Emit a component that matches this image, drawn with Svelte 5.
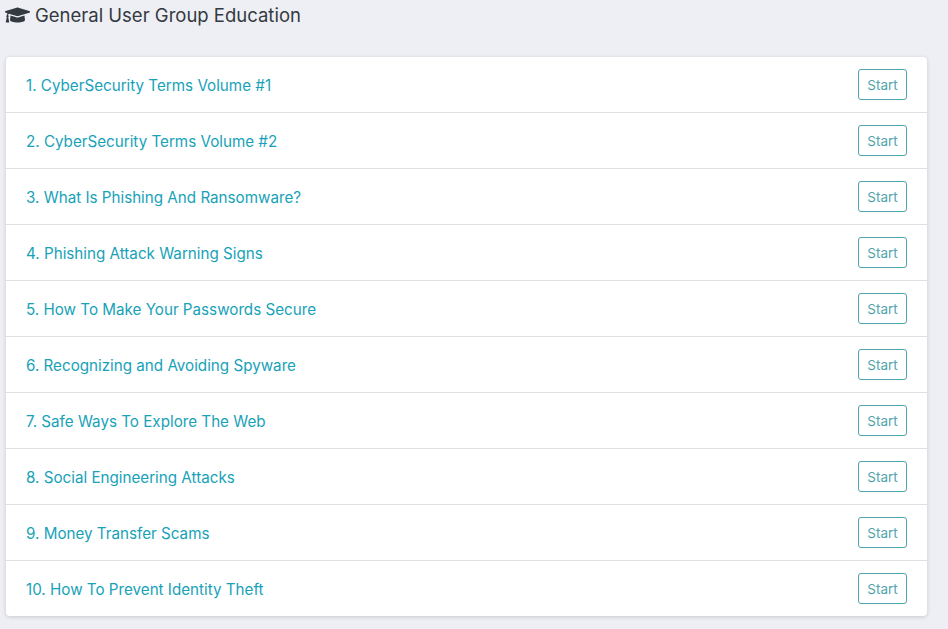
<script>
  const courses = [
    "1. CyberSecurity Terms Volume #1",
    "2. CyberSecurity Terms Volume #2",
    "3. What Is Phishing And Ransomware?",
    "4. Phishing Attack Warning Signs",
    "5. How To Make Your Passwords Secure",
    "6. Recognizing and Avoiding Spyware",
    "7. Safe Ways To Explore The Web",
    "8. Social Engineering Attacks",
    "9. Money Transfer Scams",
    "10. How To Prevent Identity Theft"
  ];
</script>

<div class="page">
  <h1 class="title">
    <svg class="cap" viewBox="0 0 640 512" aria-hidden="true">
      <path d="M622.34 153.2L343.4 67.5c-15.2-4.67-31.6-4.67-46.79 0L17.66 153.2c-23.54 7.23-23.54 38.36 0 45.59l48.63 14.94c-10.67 13.19-17.23 29.28-17.88 46.9C38.78 266.15 32 276.11 32 288c0 10.78 5.68 19.85 13.86 25.65L20.33 428.53C18.11 438.52 25.71 448 35.94 448h56.11c10.24 0 17.84-9.48 15.62-19.47L82.14 313.65C90.32 307.85 96 298.78 96 288c0-11.57-6.47-21.25-15.66-26.87.76-15.02 8.44-28.3 20.69-36.72L296.6 284.5c9.06 2.78 26.44 6.25 46.79 0l278.95-85.7c23.55-7.24 23.55-38.36 0-45.6zM352.79 315.09c-28.53 8.76-52.84 3.92-65.59 0l-145.02-44.55L128 384c0 35.35 85.96 64 192 64s192-28.65 192-64l-14.18-113.47-145.03 44.56z"/>
    </svg>
    General User Group Education
  </h1>

  <div class="card">
    {#each courses as course}
      <div class="row">
        <a class="link" href="#top">{course}</a>
        <button class="start">Start</button>
      </div>
    {/each}
  </div>
</div>

<style>
  :global(body) {
    background-color: #eeeff5;
  }
  .page {
    height: 629px;
    box-sizing: border-box;
    padding: 0 21px 0 5px;
    font-family: Inter, Roboto, sans-serif;
    overflow: hidden;
  }
  .title {
    display: flex;
    align-items: center;
    gap: 5px;
    height: 30px;
    margin: 0 0 27px;
    font-size: 18.5px;
    font-weight: 400;
    color: #343a40;
  }
  .cap {
    width: 25px;
    height: 20px;
    fill: #343a40;
  }
  .card {
    margin-left: 1px;
    background-color: #fff;
    border-radius: 4px;
    box-shadow: 0 1px 4px rgba(0, 0, 0, 0.16);
  }
  .row {
    display: flex;
    justify-content: space-between;
    align-items: center;
    height: 56px;
    box-sizing: border-box;
    padding: 0 20px;
    border-bottom: 1px solid #dfdfe3;
  }
  .row:last-child {
    height: 55px;
    border-bottom: none;
  }
  .link {
    margin-top: 2px;
    font-size: 15.2px;
    color: #17a2b8;
    text-decoration: none;
  }
  .start {
    width: 49px;
    height: 31px;
    padding: 0;
    font-family: inherit;
    font-size: 13.5px;
    color: #4fa5ad;
    background: #fff;
    border: 1px solid #4fa5ad;
    border-radius: 3px;
  }
</style>
